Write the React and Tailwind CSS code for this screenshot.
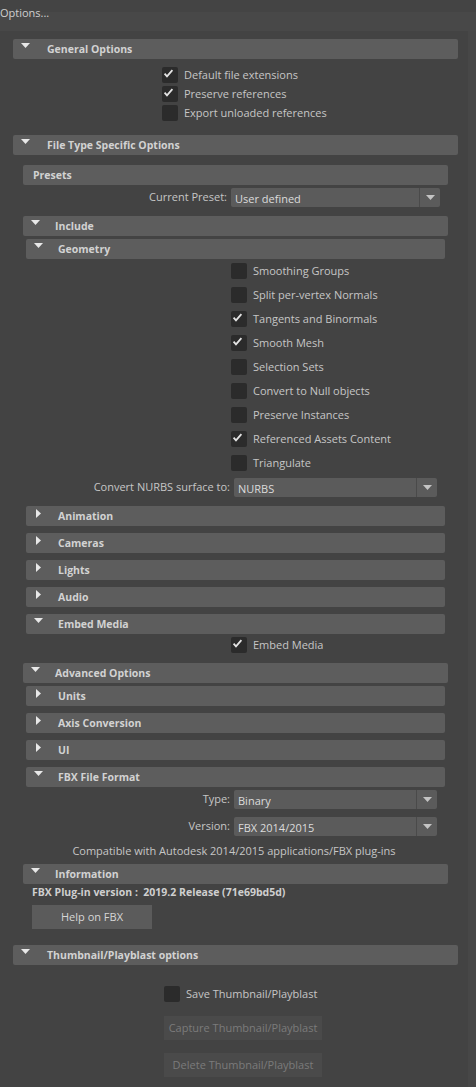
import React from "react";

const font = { fontFamily: '"Open Sans", "Noto Sans", Arial, sans-serif' };

const barPos = {
  1: "ml-[13px] w-[445px]",
  2: "ml-[23px] w-[425px]",
  3: "ml-[26px] w-[419px]",
};

const DownTri = ({ fill = "#e8e8e8" }) => (
  <svg width="9" height="5" viewBox="0 0 9 5">
    <path d="M0 0h9L4.5 5z" fill={fill} />
  </svg>
);

const RightTri = () => (
  <svg width="5" height="9" viewBox="0 0 5 9">
    <path d="M0 0l5 4.5L0 9z" fill="#e8e8e8" />
  </svg>
);

const Bar = ({ level, label, open, plain, className = "" }) => (
  <div
    className={`${barPos[level]} ${className} flex h-[20px] overflow-hidden rounded-[2px] bg-[#5d5d5d]`}
  >
    {plain ? (
      <span className="pl-[10px] text-[10.5px] font-bold leading-[21px] text-[#d2d2d2]">
        {label}
      </span>
    ) : (
      <>
        <div
          className={
            open
              ? "w-[32px] shrink-0 pl-[8px] pt-[4px]"
              : "w-[32px] shrink-0 pl-[10px] pt-[3px]"
          }
        >
          {open ? <DownTri /> : <RightTri />}
        </div>
        <span
          className={
            level === 1
              ? "pl-[2px] text-[10.5px] font-bold leading-[21px] text-[#d2d2d2]"
              : "text-[10.5px] font-bold leading-[21px] text-[#d2d2d2]"
          }
        >
          {label}
        </span>
      </>
    )}
  </div>
);

const Check = ({ checked, label, className = "" }) => (
  <div className={`flex h-[16px] items-center ${className}`}>
    <div className="h-[16px] w-[16px] shrink-0 rounded-[2px] bg-[#2b2b2b]">
      {checked && (
        <svg width="16" height="16" viewBox="0 0 16 16">
          <path
            d="M2.6 6.6L5 9.4L10.4 3.2"
            fill="none"
            stroke="#e4e4e4"
            strokeWidth="1.8"
          />
        </svg>
      )}
    </div>
    <span className="ml-[6px] whitespace-nowrap text-[11px] text-[#c6c6c6]">
      {label}
    </span>
  </div>
);

const Dropdown = ({ value, className }) => (
  <div className={`flex h-[19px] rounded-[2px] bg-[#5b5b5b] ${className}`}>
    <span className="flex-1 pl-[4px] text-[11px] leading-[21px] text-[#dcdcdc]">
      {value}
    </span>
    <div className="flex w-[21px] items-center justify-center border-l border-[#4a4a4a]">
      <DownTri fill="#c4c4c4" />
    </div>
  </div>
);

const SelectRow = ({ label, value, labelW, boxW, className = "" }) => (
  <div className={`flex items-center ${className}`}>
    <span
      className={`${labelW} shrink-0 pr-[4px] text-right text-[11px] text-[#c6c6c6]`}
    >
      {label}
    </span>
    <Dropdown value={value} className={boxW} />
  </div>
);

const geometry = [
  ["Smoothing Groups", false],
  ["Split per-vertex Normals", false],
  ["Tangents and Binormals", true],
  ["Smooth Mesh", true],
  ["Selection Sets", false],
  ["Convert to Null objects", false],
  ["Preserve Instances", false],
  ["Referenced Assets Content", true],
  ["Triangulate", false],
];

export default function App() {
  return (
    <div
      className="h-[1087px] w-[476px] overflow-hidden bg-[#444444]"
      style={font}
    >
      <div className="h-[31px] bg-[linear-gradient(to_bottom,#444444_12px,#484848_12px)] pt-[5px]">
        <span className="block text-[11px] leading-[16px] text-[#cfcfcf]">
          Options...
        </span>
      </div>

      <div className="flex">
        <div className="h-[1056px] w-[468px] bg-[#434343] pt-[8px]">
          {/* General Options */}
          <Bar level={1} label="General Options" open />
          <div className="mt-[8px] flex flex-col gap-[3px] pl-[162px]">
            <Check checked label="Default file extensions" />
            <Check checked label="Preserve references" />
            <Check label="Export unloaded references" />
          </div>

          {/* File Type Specific Options */}
          <Bar level={1} label="File Type Specific Options" open className="mt-[14px]" />
          <Bar level={2} label="Presets" plain className="mt-[10px]" />
          <SelectRow
            label="Current Preset:"
            value="User defined"
            labelW="w-[231px]"
            boxW="w-[209px]"
            className="mt-[3px]"
          />

          <Bar level={2} label="Include" open className="mt-[9px]" />
          <Bar level={3} label="Geometry" open className="mt-[3px]" />
          <div className="mt-[4px] flex flex-col gap-[8px] pl-[231px]">
            {geometry.map(([label, checked]) => (
              <Check key={label} label={label} checked={checked} />
            ))}
          </div>
          <SelectRow
            label="Convert NURBS surface to:"
            value="NURBS"
            labelW="w-[234px]"
            boxW="w-[203px]"
            className="mt-[7px]"
          />

          <Bar level={3} label="Animation" className="mt-[9px]" />
          <Bar level={3} label="Cameras" className="mt-[7px]" />
          <Bar level={3} label="Lights" className="mt-[7px]" />
          <Bar level={3} label="Audio" className="mt-[7px]" />
          <Bar level={3} label="Embed Media" open className="mt-[7px]" />
          <div className="mt-[3px] pl-[231px]">
            <Check checked label="Embed Media" />
          </div>

          <Bar level={2} label="Advanced Options" open className="mt-[10px]" />
          <Bar level={3} label="Units" className="mt-[3px]" />
          <Bar level={3} label="Axis Conversion" className="mt-[7px]" />
          <Bar level={3} label="UI" className="mt-[7px]" />
          <Bar level={3} label="FBX File Format" open className="mt-[7px]" />
          <SelectRow
            label="Type:"
            value="Binary"
            labelW="w-[234px]"
            boxW="w-[203px]"
            className="mt-[3px]"
          />
          <SelectRow
            label="Version:"
            value="FBX 2014/2015"
            labelW="w-[234px]"
            boxW="w-[203px]"
            className="mt-[8px]"
          />
          <div className="mt-[7px] h-[14px] text-center text-[11px] leading-[15px] text-[#c6c6c6]">
            Compatible with Autodesk 2014/2015 applications/FBX plug-ins
          </div>

          <Bar level={2} label="Information" open className="mt-[7px]" />
          <div className="mt-[1px] h-[14px] pl-[32px] text-[10.5px] font-bold leading-[15px] text-[#cfcfcf]">
            FBX Plug-in version :&nbsp; 2019.2 Release (71e69bd5d)
          </div>
          <button className="ml-[32px] mt-[6px] block h-[24px] w-[120px] bg-[#5b5b5b] text-[11px] text-[#d6d6d6]">
            Help on FBX
          </button>

          {/* Thumbnail */}
          <Bar level={1} label="Thumbnail/Playblast options" open className="mt-[16px]" />
          <div className="mt-[21px] pl-[164px]">
            <Check label="Save Thumbnail/Playblast" />
          </div>
          <button className="ml-[164px] mt-[14px] block h-[24px] w-[158px] bg-[#4a4a4a] text-[11px] text-[#7b7b7b]">
            Capture Thumbnail/Playblast
          </button>
          <button className="ml-[164px] mt-[13px] block h-[24px] w-[158px] bg-[#4a4a4a] text-[11px] text-[#7b7b7b]">
            Delete Thumbnail/Playblast
          </button>
        </div>
        <div className="h-[1056px] w-[8px] bg-[#474747]" />
      </div>
    </div>
  );
}
